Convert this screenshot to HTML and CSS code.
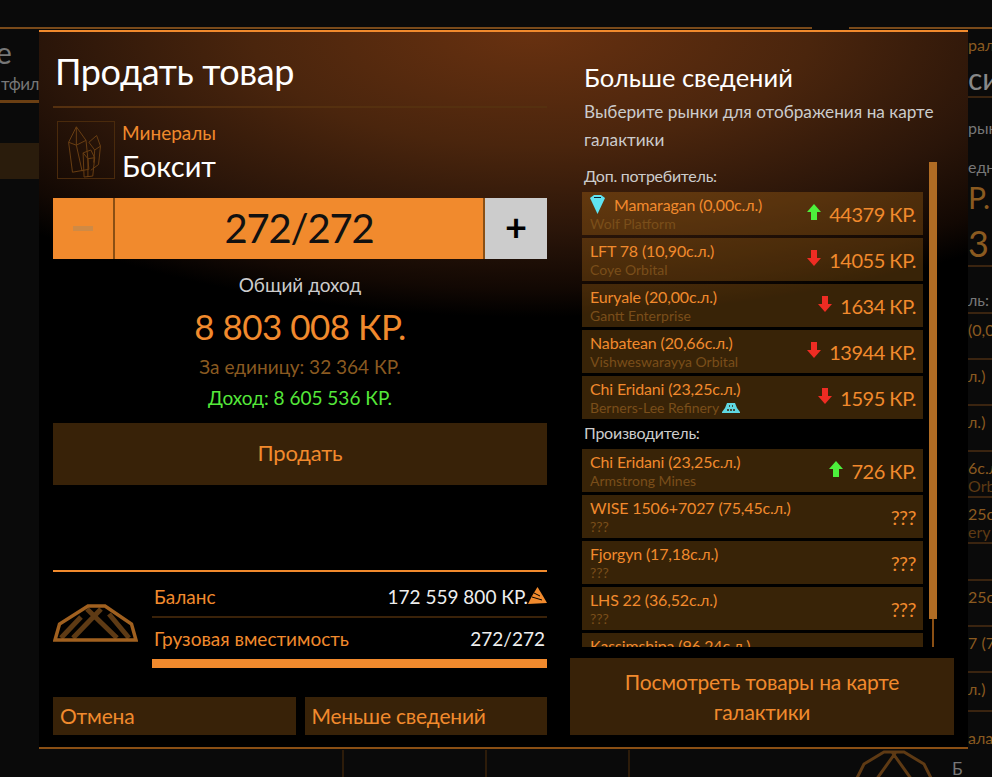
FILE: index.html
```html
<!DOCTYPE html>
<html>
<head>
	<meta charset="utf-8">
	<title>Продать товар</title>
	<link rel="stylesheet" href="styles.css">
</head>
<body>
	<div class="topbar">
		<div class="topline topline-a"></div>
		<div class="topline topline-b"></div>
	</div>
	<div class="middle">
		<div class="ghost-left">
			<div class="gl-title">e</div>
			<div class="gl-sub">тфил</div>
			<div class="gl-item">ы</div>
			<div class="gl-row"></div>
		</div>

		<div class="modal">
			<div class="col-left">
				<h1 class="title">Продать товар</h1>
				<div class="goods">
					<svg class="goods-icon" viewBox="0 0 58 58" fill="none" stroke="#6b3f13" stroke-width="1">
						<path d="M11 21L19 5L29 19L32 49L15 52Z M11 21L19 24L29 19 M19 24L25 51 M19 5L19 24"/>
						<path d="M32 21L40 14L44 25L42 44L34 50 M32 21L38 29L44 25 M38 29L37 42"/>
						<path d="M26 32L34 29L38 37L36 56L27 57Z M26 32L31 38L38 37 M31 38L31 57"/>
					</svg>
					<div>
						<div class="goods-cat">Минералы</div>
						<div class="goods-name">Боксит</div>
					</div>
				</div>
				<div class="stepper">
					<div class="step-minus"></div>
					<div class="step-value">272/272</div>
					<div class="step-plus">+</div>
				</div>
				<div class="total-label">Общий доход</div>
				<div class="total-value">8 803 008 КР.</div>
				<div class="unit-price">За единицу: 32 364 КР.</div>
				<div class="profit">Доход: 8 605 536 КР.</div>
				<div class="btn btn-sell">Продать</div>

				<div class="ship-panel">
					<svg class="ship-icon" viewBox="0 0 85 38" fill="none">
						<path d="M8 34L28 13M20 34L48 5M64 34L34 5M76 34L56 10" stroke="#5e3a14" stroke-width="5"/>
						<path d="M2 36L6.500 20L35 2H52L78.500 20L83 36Z" stroke="#a0601f" stroke-width="3.500"/>
					</svg>
					<div class="ship-info">
						<div class="info-row info-balance">
							<span>Баланс</span>
							<span class="info-value">172 559 800 КР.<svg class="flame" viewBox="0 0 19 17"><path d="M9.500 0L15 9L19 16L0 17L4 9Z" fill="#f18a2d"/><path d="M4 10L14 13M6 6L12 9" stroke="#000" stroke-width="1"/></svg></span>
						</div>
						<div class="info-row">
							<span>Грузовая вместимость</span>
							<span class="info-value">272/272</span>
						</div>
						<div class="cargo-bar"></div>
					</div>
				</div>
				<div class="btn-row">
					<div class="btn btn-small">Отмена</div>
					<div class="btn btn-small">Меньше сведений</div>
				</div>
			</div>

			<div class="col-right">
				<h2 class="more-title">Больше сведений</h2>
				<p class="more-text">Выберите рынки для отображения на карте галактики</p>
				<div class="list-wrap">
					<div class="list">
						<div class="list-label">Доп. потребитель:</div>
						<div class="row">
							<div class="row-text">
								<div class="row-name"><svg class="gem" viewBox="0 0 15 19"><path d="M0 3L4 0H11L15 3L7.500 19Z" fill="#5fe3f2"/><path d="M4 2.500H11" stroke="#123" stroke-width="1"/></svg>Mamaragan (0,00с.л.)</div>
								<div class="row-sub">Wolf Platform</div>
							</div>
							<svg class="arrow" viewBox="0 0 14 16"><path d="M7 0L14 8H10V16H4V8H0Z" fill="#4df03c"/></svg>
							<div class="row-price">44379 КР.</div>
						</div>
						<div class="row">
							<div class="row-text">
								<div class="row-name">LFT 78 (10,90с.л.)</div>
								<div class="row-sub">Coye Orbital</div>
							</div>
							<svg class="arrow" viewBox="0 0 14 16"><path d="M7 16L14 8H10V0H4V8H0Z" fill="#ee2c23"/></svg>
							<div class="row-price">14055 КР.</div>
						</div>
						<div class="row">
							<div class="row-text">
								<div class="row-name">Euryale (20,00с.л.)</div>
								<div class="row-sub">Gantt Enterprise</div>
							</div>
							<svg class="arrow" viewBox="0 0 14 16"><path d="M7 16L14 8H10V0H4V8H0Z" fill="#ee2c23"/></svg>
							<div class="row-price">1634 КР.</div>
						</div>
						<div class="row">
							<div class="row-text">
								<div class="row-name">Nabatean (20,66с.л.)</div>
								<div class="row-sub">Vishweswarayya Orbital</div>
							</div>
							<svg class="arrow" viewBox="0 0 14 16"><path d="M7 16L14 8H10V0H4V8H0Z" fill="#ee2c23"/></svg>
							<div class="row-price">13944 КР.</div>
						</div>
						<div class="row">
							<div class="row-text">
								<div class="row-name">Chi Eridani (23,25с.л.)</div>
								<div class="row-sub">Berners-Lee Refinery <svg class="station" viewBox="0 0 18 10"><path d="M5 0H13L15 5L18 9V10H0V9L3 5Z" fill="#5fd8e2"/><path d="M7 3H8M10 3H11M5 7H7M8 7H10M11 7H13" stroke="#3a2209" stroke-width="1.500"/></svg></div>
							</div>
							<svg class="arrow" viewBox="0 0 14 16"><path d="M7 16L14 8H10V0H4V8H0Z" fill="#ee2c23"/></svg>
							<div class="row-price">1595 КР.</div>
						</div>
						<div class="list-label list-label-second">Производитель:</div>
						<div class="row">
							<div class="row-text">
								<div class="row-name">Chi Eridani (23,25с.л.)</div>
								<div class="row-sub">Armstrong Mines</div>
							</div>
							<svg class="arrow" viewBox="0 0 14 16"><path d="M7 0L14 8H10V16H4V8H0Z" fill="#4df03c"/></svg>
							<div class="row-price">726 КР.</div>
						</div>
						<div class="row">
							<div class="row-text">
								<div class="row-name">WISE 1506+7027 (75,45с.л.)</div>
								<div class="row-sub">???</div>
							</div>
							<div class="row-price">???</div>
						</div>
						<div class="row">
							<div class="row-text">
								<div class="row-name">Fjorgyn (17,18с.л.)</div>
								<div class="row-sub">???</div>
							</div>
							<div class="row-price">???</div>
						</div>
						<div class="row">
							<div class="row-text">
								<div class="row-name">LHS 22 (36,52с.л.)</div>
								<div class="row-sub">???</div>
							</div>
							<div class="row-price">???</div>
						</div>
						<div class="row">
							<div class="row-text">
								<div class="row-name">Kassimshipa (96,24с.л.)</div>
								<div class="row-sub">???</div>
							</div>
							<div class="row-price">???</div>
						</div>
					</div>
					<div class="scroll-track"><div class="scroll-thumb"></div></div>
				</div>
				<div class="btn btn-map">Посмотреть товары на карте галактики</div>
			</div>
		</div>

		<div class="ghost-right">
			<div class="gr gr-cat">рал</div>
			<div class="gr gr-name">си</div>
			<div class="gr gr-text">рын</div>
			<div class="gr gr-label">едня</div>
			<div class="gr gr-big">Р.</div>
			<div class="gr gr-big2">3 К</div>
			<div class="gr gr-small">ль:</div>
			<div class="gr gr-row">(0,0</div>
			<div class="gr gr-row">л.)</div>
			<div class="gr gr-row">л.)</div>
			<div class="gr gr-row">6с.л<div class="gr-dim">Orbi</div></div>
			<div class="gr gr-row">25с.<div class="gr-dim">ery</div></div>
			<div class="gr gr-gap"></div>
			<div class="gr gr-row">25с.</div>
			<div class="gr gr-row">7 (7</div>
			<div class="gr gr-row gr-short">л.)</div>
			<div class="gr gr-last">алаг</div>
		</div>
	</div>
	<div class="bottombar">
		<div class="cell cell-1"></div>
		<div class="cell"></div>
		<div class="cell cell-3"></div>
		<svg class="ghost-ship" viewBox="0 0 80 30" fill="none" stroke="#5e3a14" stroke-width="3">
			<path d="M2 30L10 14L30 2H50L70 14L78 30M22 30L42 2M58 30L38 2"/>
		</svg>
		<div class="ghost-b">Б</div>
	</div>
</body>
</html>
```

FILE: styles.css
```css
*{margin: 0; padding: 0; box-sizing: border-box;}
html, body{
	height: 777px;
	overflow: hidden;
}
body{
	background: #0a0a0a;
	font-family: Lato, "Noto Sans", sans-serif;
	color: #f18a2d;
}
.topbar{
	display: flex;
	align-items: flex-end;
	height: 30px;
	padding-bottom: 1px;
}
.topline{
	height: 2px;
	background: #7a4a1a;
}
.topline-a{width: 812px;}
.topline-b{flex: 1; margin-left: 37px;}
.middle{
	display: flex;
	height: 720px;
}

/* window behind the dialog */
.ghost-left{
	width: 39px;
	overflow: hidden;
	color: #777;
}
.gl-title{
	font-size: 30px;
	line-height: 40px;
	margin: 2px 0 0 -4px;
}
.gl-sub{
	font-size: 17px;
	line-height: 24px;
	text-align: right;
	white-space: nowrap;
	letter-spacing: -.5px;
	margin-top: 0;
	padding-bottom: 4px;
	border-bottom: 3px solid #6b3f13;
}
.gl-item{
	font-size: 14px;
	line-height: 20px;
	margin: 7px 0 0 -10px;
	color: #666;
}
.gl-row{
	height: 36px;
	margin-top: 13px;
	background: #2a1c0c;
}
.ghost-right{
	width: 24px;
	overflow: hidden;
	white-space: nowrap;
	color: #8a5a20;
}
.gr{
	font-size: 16px;
	line-height: 18px;
	height: 46px;
	padding-top: 7px;
	border-bottom: 2px solid #3a2410;
}
.gr-cat{height: 30px; border: 0; line-height: 30px; padding-top: 0;}
.gr-name{height: 38px; font-size: 30px; color: #888; padding-top: 0; line-height: 36px;}
.gr-text{height: 60px; border: 0; color: #777; line-height: 60px; padding-top: 0;}
.gr-label{height: 18px; border: 0; color: #777; padding-top: 0;}
.gr-big{height: 42px; border: 0; font-size: 30px; line-height: 42px; padding-top: 0;}
.gr-big2{height: 49px; font-size: 36px; line-height: 50px; padding-top: 0;}
.gr-small{height: 47px; color: #777; padding-top: 24px;}
.gr-dim{color: #5e3a14;}
.gr-gap{height: 37px; padding-top: 0;}
.gr-short{height: 39px;}
.gr-last{height: 35px; border: 0; padding-top: 17px;}

/* dialog */
.modal{
	width: 929px;
	height: 719px;
	display: flex;
	justify-content: space-between;
	padding: 0 14px;
	border-top: 2px solid #f18a2d;
	border-bottom: 2px solid #8a4f14;
	background: radial-gradient(ellipse 700px 285px at 53% 0, #683110 0%, #4a250d 40%, #2a1509 70%, #120803 90%, #000 100%) #000;
}
.col-left{
	width: 494px;
	display: flex;
	flex-direction: column;
}
.title{
	font-size: 36px;
	font-weight: 400;
	line-height: 44px;
	letter-spacing: -.4px;
	color: #fff;
	padding: 17px 0 0 2px;
	height: 76px;
	border-bottom: 2px solid #55300f;
}
.goods{
	display: flex;
	gap: 7px;
	margin: 13px 0 0 4px;
}
.goods-icon{
	width: 58px;
	height: 58px;
	border: 1px solid #4a2a0c;
}
.goods-cat{
	font-size: 19px;
	line-height: 24px;
}
.goods-name{
	font-size: 29px;
	line-height: 40px;
	color: #fff;
	margin-top: 1px;
}
.stepper{
	display: flex;
	height: 61px;
	margin-top: 12px;
	background: #f18a2d;
}
.step-minus{
	width: 62px;
	display: flex;
	align-items: center;
	justify-content: center;
	border-right: 2px solid #8a4f14;
}
.step-minus::before{
	content: "";
	width: 20px;
	height: 5px;
	background: #cf8a45;
}
.step-value{
	flex: 1;
	text-align: center;
	font-size: 40px;
	line-height: 61px;
	letter-spacing: -1.2px;
	color: #111;
}
.step-plus{
	width: 64px;
	background: #cccccc;
	border-left: 2px solid #8a4f14;
	text-align: center;
	font-size: 38px;
	line-height: 57px;
	font-weight: 700;
	color: #000;
}
.total-label{
	text-align: center;
	font-size: 19px;
	line-height: 26px;
	color: #ccc;
	margin-top: 13px;
}
.total-value{
	text-align: center;
	font-size: 35px;
	line-height: 46px;
	letter-spacing: -.5px;
	margin-top: 5px;
}
.unit-price{
	text-align: center;
	font-size: 19px;
	line-height: 26px;
	color: #8a5a20;
	margin-top: 5px;
}
.profit{
	text-align: center;
	font-size: 19px;
	line-height: 26px;
	color: #55e83a;
	margin-top: 5px;
}
.btn{
	background: #382208;
	font-size: 21px;
	letter-spacing: -.2px;
	color: #f18a2d;
}
.btn-sell{
	height: 62px;
	line-height: 60px;
	font-size: 22px;
	text-align: center;
	margin-top: 12px;
}
.ship-panel{
	display: flex;
	align-items: flex-start;
	margin-top: 85px;
	border-top: 2px solid #f18a2d;
	padding-top: 9px;
}
.ship-icon{
	width: 85px;
	height: 38px;
	margin-top: 23px;
	flex: none;
}
.ship-info{
	flex: 1;
	margin-left: 14px;
}
.info-row{
	display: flex;
	justify-content: space-between;
	font-size: 19px;
	line-height: 32px;
	padding-left: 2px;
}
.info-balance{
	height: 37px;
	border-bottom: 2px solid #3a2209;
}
.info-row + .info-row{
	margin-top: 5px;
	padding-right: 2px;
}
.info-value{
	color: #eee;
}
.flame{
	width: 19px;
	height: 17px;
}
.cargo-bar{
	height: 9px;
	margin-top: 4px;
	background: #f18a2d;
}
.btn-row{
	display: flex;
	gap: 9px;
	margin-top: 29px;
}
.btn-small{
	flex: 1;
	height: 38px;
	line-height: 38px;
	padding-left: 7px;
}

.col-right{
	width: 384px;
	display: flex;
	flex-direction: column;
}
.more-title{
	font-size: 25.500px;
	font-weight: 400;
	line-height: 32px;
	color: #fff;
	padding: 29px 0 0 14px;
	height: 61px;
}
.more-text{
	font-size: 17.200px;
	line-height: 28px;
	color: #ccc;
	padding: 5px 14px 0;
	height: 69px;
}
.list-wrap{
	display: flex;
	height: 485px;
	padding-left: 12px;
}
.list{
	width: 341px;
	overflow: hidden;
}
.list-label{
	font-size: 16px;
	line-height: 22px;
	letter-spacing: -.25px;
	color: #ccc;
	padding: 3px 0 0 2px;
	height: 30px;
}
.list-label-second{
	margin-top: -3px;
}
.row{
	display: flex;
	align-items: center;
	height: 43px;
	margin-bottom: 3px;
	padding: 0 7px 0 8px;
	background: rgba(241, 150, 30, .23);
}
.row-text{
	flex: 1;
	white-space: nowrap;
}
.row-name{
	font-size: 16px;
	line-height: 20px;
	letter-spacing: -.15px;
}
.row-sub{
	font-size: 14px;
	line-height: 17px;
	color: #7a4e1a;
}
.gem{
	width: 15px;
	height: 19px;
	margin: -5px 9px 0 0;
	vertical-align: middle;
}
.station{
	width: 18px;
	height: 10px;
}
.arrow{
	width: 14px;
	height: 16px;
	margin: -4px 8px 0 0;
}
.row-price{
	font-size: 20px;
	line-height: 26px;
	letter-spacing: -.5px;
}
.scroll-track{
	width: 8px;
	margin-left: 6px;
	border-left: 3px solid transparent;
	border-right: 3px solid transparent;
	background: #8a4f14 content-box;
	position: relative;
}
.scroll-thumb{
	position: absolute;
	top: 0;
	left: -3px;
	width: 8px;
	height: 457px;
	background: #b06c24;
}
.btn-map{
	height: 77px;
	margin-top: 11px;
	padding: 9px 40px 0;
	text-align: center;
	line-height: 30px;
}

/* strip under the dialog */
.bottombar{
	display: flex;
	height: 27px;
	overflow: hidden;
}
.cell{
	width: 143px;
	border-right: 2px solid #2d1c0a;
}
.cell-1{width: 344px;}
.ghost-ship{
	width: 80px;
	height: 30px;
	margin-left: 224px;
	flex: none;
}
.ghost-b{
	font-size: 17px;
	margin: 8px 0 0 18px;
	color: #777;
}
```
